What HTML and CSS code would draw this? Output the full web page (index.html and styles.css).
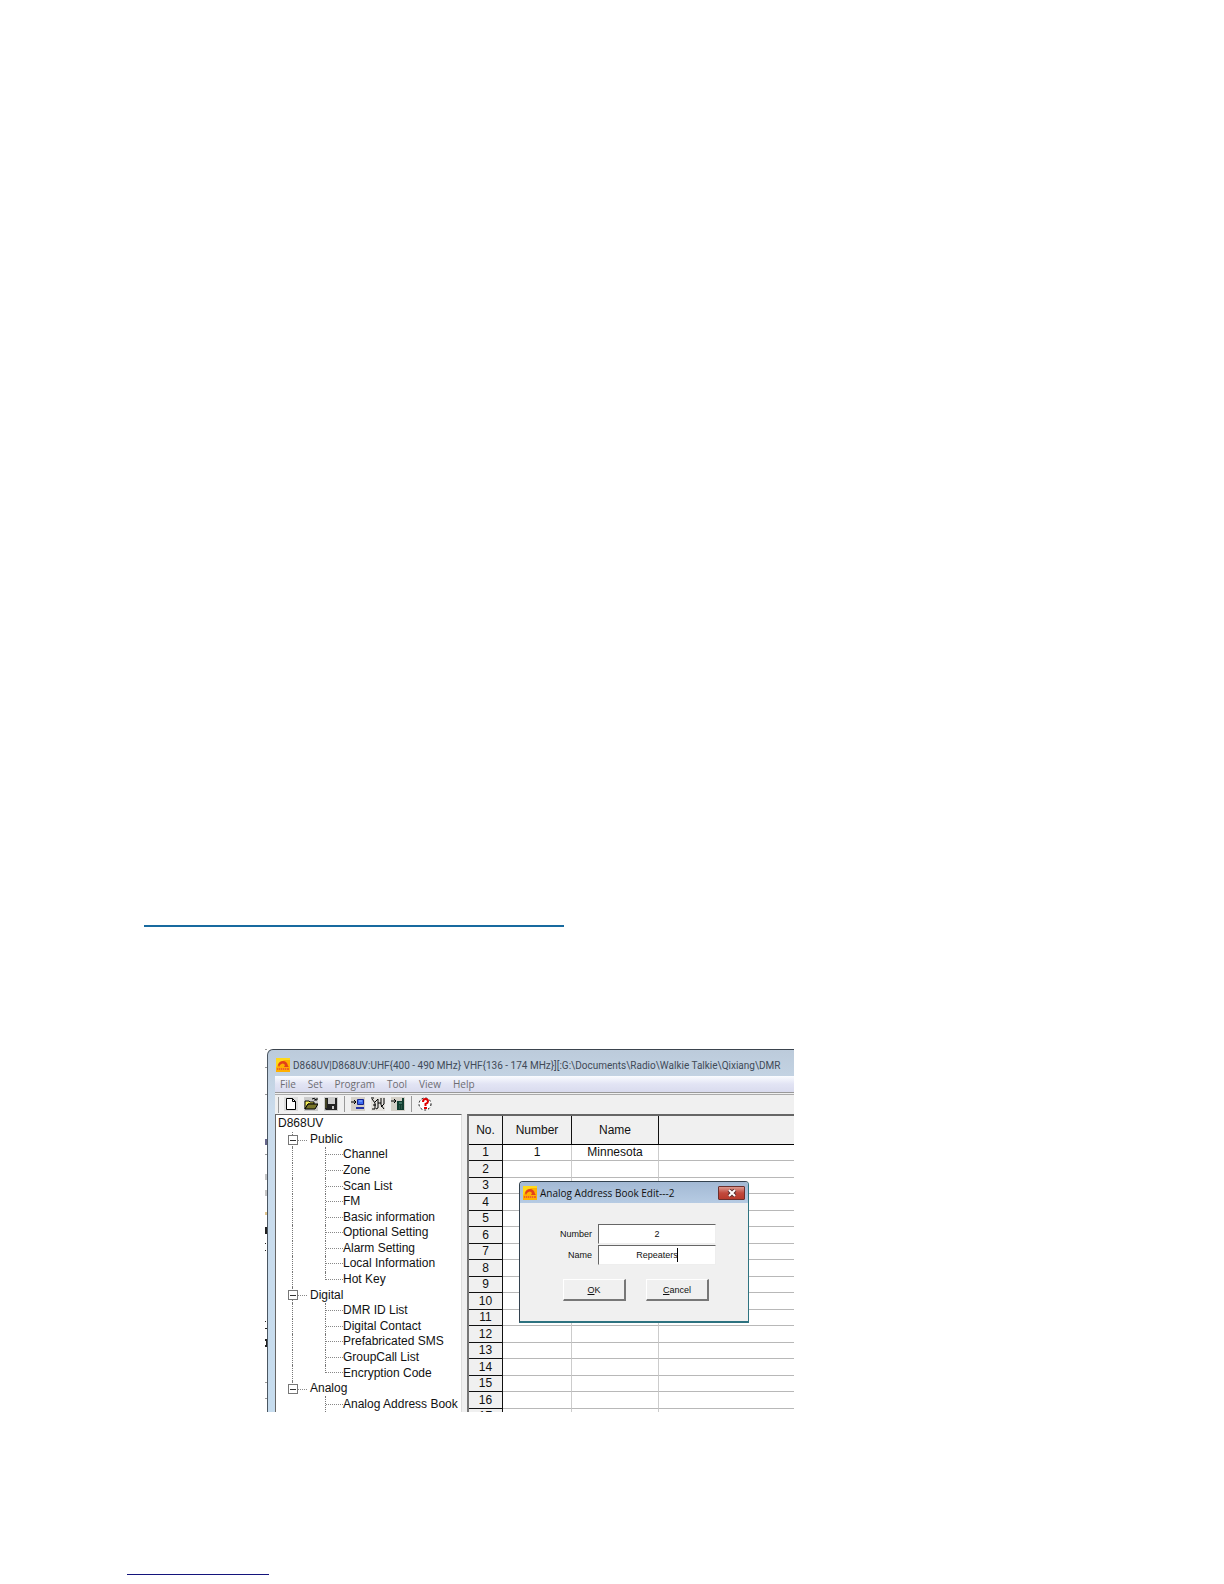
FILE: index.html
```html
<!DOCTYPE html>
<html lang="en">

<head>
  <meta charset="UTF-8">
  <meta name="viewport" content="width=device-width, initial-scale=1.0">
  <title>Analog Address Book</title>
  <link rel="stylesheet" href="styles.css">
</head>

<body>

  <svg class="defs" width="0" height="0">
    <symbol id="logo" viewBox="0 0 14 14">
      <rect width="14" height="14" fill="#ffb000" />
      <path d="M0 0h14v2L8 2 2 6 0 10z" fill="#ffd91a" />
      <path d="M2 7q1-4 5-4t5 5l1 1H8l1-2Q7 4 4 7L3 9z" fill="#e2401a" />
      <path d="M1 10h12v2H1z" fill="#f0641e" />
      <path d="M2 11h10" stroke="#ffc31a" stroke-dasharray="1 1" />
    </symbol>
  </svg>

  <main class="page">
    <hr class="rule rule-heading">

    <div class="figure">
      <svg class="behind" viewBox="0 0 2 363">
        <path d="M0 0h2v1H0zM0 18h2v1H0zM0 45h2v1H0zM0 105h2v1H0zM0 333h2v1H0zM0 349h2v1H0z" fill="#999" />
        <path d="M0 90h2v6H0z" fill="#66668c" />
        <path d="M0 125h2v6H0zM0 141h2v6H0z" fill="#c4c4c4" />
        <path d="M0 163h2v3H0z" fill="#e0c48c" />
        <path d="M0 178h2v7H0zM0 194h1v1H0zM0 201h1v1H0zM0 272h1v1H0zM0 279h2v1H0zM0 290h2v2H0zM0 296h2v2H0zM1 292h1v4H1z" fill="#222" />
      </svg>

      <div class="window">
        <div class="titlebar">
          <svg class="logo"><use href="#logo" /></svg>
          <span>D868UV|D868UV:UHF{400 - 490 MHz} VHF{136 - 174 MHz}][:G:\Documents\Radio\Walkie Talkie\Qixiang\DMR</span>
        </div>

        <div class="client">
          <nav class="menu">
            <button>File</button>
            <button>Set</button>
            <button>Program</button>
            <button>Tool</button>
            <button>View</button>
            <button>Help</button>
          </nav>

          <div class="toolbar">
            <button aria-label="New">
              <svg viewBox="0 0 14 14"><rect width="14" height="14" fill="#ddd" /><path d="M2.500 1.500h6l3 3v8h-9z" fill="#fff" stroke="#000" /><path d="M8.500 1.500v3h3" fill="none" stroke="#000" /></svg>
            </button>
            <button aria-label="Open">
              <svg viewBox="0 0 14 14"><rect width="14" height="14" fill="#ccc" /><path d="M1 4h4l1 1h4v2H4l-3 5z" fill="#f5ee58" stroke="#000" /><path d="M4 7h10l-3 5H1z" fill="#77742a" stroke="#000" /><path d="M8 2q3-2 4 1M10 3h3V1" fill="none" stroke="#000" /></svg>
            </button>
            <button aria-label="Save">
              <svg viewBox="0 0 14 14"><rect width="14" height="14" fill="#ccc" /><path d="M1 1h12v12H2l-1-1z" fill="#222" /><path d="M4 1h7v6H4z" fill="#ccc" /><path d="M8 9h2v3H8z" fill="#ccc" /><path d="M2 2v9" stroke="#67672a" /></svg>
            </button>
            <i></i>
            <button aria-label="Read from radio">
              <svg viewBox="0 0 14 14"><rect width="14" height="14" fill="#d4d0c8" /><path d="M0 5h5M3 3l2 2-2 2" fill="none" stroke="#000" /><path d="M6.500 2.500h6v5h-6z" fill="#3d6cf0" stroke="#14208c" /><path d="M8 4h3" stroke="#9cc0ff" /><path d="M5 10h8v2H5z" fill="#2736a4" /></svg>
            </button>
            <button aria-label="Find">
              <svg viewBox="0 0 14 14"><rect width="14" height="14" fill="#e4e2de" /><path d="M1 2l3 4v6H1M4 5l3-3v9l-2 1M7 6h3M10 1v7l3 4M13 1v6l-3 3M2 8h3M0 1h3" fill="none" stroke="#000" /></svg>
            </button>
            <button aria-label="Write to radio">
              <svg viewBox="0 0 14 14"><rect width="14" height="14" fill="#d4d0c8" /><path d="M0 4h5M3 2l2 2-2 2" fill="none" stroke="#000" /><path d="M6 4h7v9H6zM11 1h2v3h-2z" fill="#123d30" /><path d="M8 6h3" stroke="#6fa892" /><path d="M8 9h4M8 11h4" stroke="#48735f" stroke-dasharray="1 1" /></svg>
            </button>
            <i></i>
            <button aria-label="Help">
              <svg viewBox="0 0 14 14"><circle cx="7" cy="7" r="6" fill="#fff" stroke="#000" stroke-dasharray="2 2" /><path d="M5 5q0-3 2.500-3T10 4.500Q10 6 7.500 7v2" fill="none" stroke="#e00000" stroke-width="2" /><path d="M6 10h3v2H6z" fill="#e00000" /></svg>
            </button>
          </div>

          <div class="panes">
            <ul class="tree">
              <li class="root">D868UV</li>
              <li class="branch first">Public</li>
              <li class="leaf">Channel</li>
              <li class="leaf">Zone</li>
              <li class="leaf">Scan List</li>
              <li class="leaf">FM</li>
              <li class="leaf">Basic information</li>
              <li class="leaf">Optional Setting</li>
              <li class="leaf">Alarm Setting</li>
              <li class="leaf">Local Information</li>
              <li class="leaf last">Hot Key</li>
              <li class="branch">Digital</li>
              <li class="leaf">DMR ID List</li>
              <li class="leaf">Digital Contact</li>
              <li class="leaf">Prefabricated SMS</li>
              <li class="leaf">GroupCall List</li>
              <li class="leaf last">Encryption Code</li>
              <li class="branch end">Analog</li>
              <li class="leaf under-end">Analog Address Book</li>
            </ul>

            <div class="sheet">
              <table>
                <thead>
                  <tr><th class="col-no">No.</th><th class="col-number">Number</th><th class="col-name">Name</th><th></th></tr>
                </thead>
                <tbody>
                  <tr><th>1</th><td>1</td><td>Minnesota</td><td></td></tr>
                  <tr><th>2</th><td></td><td></td><td></td></tr>
                  <tr><th>3</th><td></td><td></td><td></td></tr>
                  <tr><th>4</th><td></td><td></td><td></td></tr>
                  <tr><th>5</th><td></td><td></td><td></td></tr>
                  <tr><th>6</th><td></td><td></td><td></td></tr>
                  <tr><th>7</th><td></td><td></td><td></td></tr>
                  <tr><th>8</th><td></td><td></td><td></td></tr>
                  <tr><th>9</th><td></td><td></td><td></td></tr>
                  <tr><th>10</th><td></td><td></td><td></td></tr>
                  <tr><th>11</th><td></td><td></td><td></td></tr>
                  <tr><th>12</th><td></td><td></td><td></td></tr>
                  <tr><th>13</th><td></td><td></td><td></td></tr>
                  <tr><th>14</th><td></td><td></td><td></td></tr>
                  <tr><th>15</th><td></td><td></td><td></td></tr>
                  <tr><th>16</th><td></td><td></td><td></td></tr>
                  <tr><th>17</th><td></td><td></td><td></td></tr>
                </tbody>
              </table>
            </div>
          </div>
        </div>
      </div>

      <form class="dialog">
        <div class="dialog-title">
          <svg class="logo"><use href="#logo" /></svg>
          <span>Analog Address Book Edit---2</span>
          <button type="button" class="close" aria-label="Close">
            <svg viewBox="0 0 10 8"><path d="M2 1l6 6M8 1L2 7" stroke="#5a3030" stroke-width="4" /><path d="M2 1l6 6M8 1L2 7" stroke="#fff" stroke-width="2" /></svg>
          </button>
        </div>
        <div class="fields">
          <label for="number">Number</label>
          <input id="number" type="text" value="2">
          <label for="name">Name</label>
          <div class="caret-box">
            <input id="name" type="text" value="Repeaters">
            <span class="caret"></span>
          </div>
        </div>
        <div class="actions">
          <button type="button"><u>O</u>K</button>
          <button type="button"><u>C</u>ancel</button>
        </div>
      </form>
    </div>

    <hr class="rule rule-footer">
  </main>

</body>

</html>
```

FILE: styles.css
```css
* {
  margin: 0;
  padding: 0;
  box-sizing: border-box;
}

body {
  background: #fff;
  color: #111;
  font-family: "Liberation Sans", Arial, sans-serif;
  font-size: 12px;
}

button {
  border: 0;
  background: none;
  font: inherit;
  color: inherit;
}

.defs {
  display: block;
}

.page {
  padding: 925px 127px 0;
}

.rule {
  border: 0;
}

.rule-heading {
  width: 420px;
  max-width: 100%;
  height: 2px;
  margin-left: 17px;
  background: #186a9f;
}

.rule-footer {
  width: 142px;
  height: 1px;
  margin-top: 162px;
  background: #14147c;
}

.figure {
  position: relative;
  display: flex;
  max-width: 529px;
  height: 363px;
  margin: 122px 0 0 138px;
  overflow: hidden;
}

/* sliver of the window lying behind */
.behind {
  flex: none;
  width: 2px;
  height: 363px;
}

.window {
  flex: 1;
  min-width: 0;
  display: flex;
  flex-direction: column;
  padding-left: 7px;
  border-top: 1px solid #3b444e;
  border-left: 1px solid #4b5661;
  border-top-left-radius: 6px;
  background: linear-gradient(#bccbdb, #cbdcec 60px, #c6dcee);
}

.titlebar {
  display: flex;
  align-items: center;
  gap: 3px;
  height: 26px;
  padding: 4px 0 0 1px;
  color: #3f4a57;
  font-family: Roboto, sans-serif;
  font-size: 10px;
  white-space: nowrap;
}

.logo {
  flex: none;
  width: 14px;
  height: 14px;
}

.client {
  flex: 1;
  min-height: 0;
  display: flex;
  flex-direction: column;
  background: #f0f0f0;
}

.menu {
  display: flex;
  gap: 12px;
  height: 16px;
  padding-left: 5px;
  background: linear-gradient(#fafcff, #e2e4f4 50%, #d9dbee);
  color: #6d6d72;
  font-family: "Open Sans", sans-serif;
  font-size: 10px;
}

.toolbar {
  display: flex;
  align-items: center;
  gap: 6px;
  height: 22px;
  padding-left: 9px;
  border-top: 1px solid #999;
  box-shadow: inset 0 1px #f0f0f0, inset 0 2px #aaa;
  background: linear-gradient(#999, #999) 3px 4px / 1px 16px no-repeat;
}

.toolbar svg {
  display: block;
  width: 14px;
  height: 14px;
}

.toolbar i {
  width: 1px;
  height: 16px;
  background: #999;
}

.panes {
  flex: 1;
  min-height: 0;
  display: flex;
  gap: 5px;
}

.tree {
  flex: none;
  width: 187px;
  display: grid;
  grid-auto-rows: 1fr;
  padding-top: 1px;
  border-top: 1px solid #666;
  border-left: 1px solid #666;
  border-right: 1px solid #ddd;
  background: #fff;
  list-style: none;
  overflow: hidden;
}

.tree li {
  position: relative;
  display: flex;
  align-items: center;
  min-height: 0;
  line-height: 15px;
  white-space: nowrap;
}

.tree .root {
  padding-left: 2px;
}

.tree .branch {
  padding-left: 34px;
}

.tree .leaf {
  padding-left: 67px;
}

/* trunk down the left, then the inner line with its stub */
.branch::before,
.leaf::before {
  content: '';
  position: absolute;
  top: 0;
  bottom: 0;
  left: 16px;
  border-left: 1px dotted #777;
}

.branch.end::before {
  bottom: 50%;
}

.leaf.under-end::before {
  display: none;
}

.leaf::after {
  content: '';
  position: absolute;
  top: 0;
  bottom: 0;
  left: 49px;
  width: 17px;
  border-left: 1px dotted #777;
  background: repeating-linear-gradient(90deg, #888 0 1px, transparent 1px 2px) 0 50% / 100% 1px no-repeat;
}

.leaf.last::after {
  bottom: 50%;
  background-position: 0 100%;
}

.branch::after {
  content: '';
  position: absolute;
  top: 3px;
  left: 12px;
  width: 20px;
  height: 10px;
  background:
    linear-gradient(#333, #333) 2px 5px / 6px 1px no-repeat,
    linear-gradient(#777, #777) 0 0 / 10px 1px no-repeat,
    linear-gradient(#777, #777) 0 9px / 10px 1px no-repeat,
    linear-gradient(#777, #777) 0 0 / 1px 10px no-repeat,
    linear-gradient(#777, #777) 9px 0 / 1px 10px no-repeat,
    linear-gradient(#fff, #fff) 1px 1px / 8px 8px no-repeat,
    repeating-linear-gradient(90deg, #888 0 1px, transparent 1px 2px) 0 5px / 100% 1px no-repeat;
}

.sheet {
  flex: 1;
  min-width: 0;
  border-top: 2px solid #666;
  border-left: 2px solid #777;
  background: #fff;
  overflow: hidden;
}

table {
  width: 100%;
  table-layout: fixed;
  border-collapse: separate;
  border-spacing: 0;
  text-align: center;
}

th,
td {
  height: 16px;
  line-height: 15px;
  font-weight: normal;
  border-right: 1px solid #ccc;
  border-bottom: 1px solid #b8b8b8;
}

tbody tr:nth-child(even) > * {
  height: 17px;
}

th {
  background: #f0f0f0;
  border-right-color: #111;
  border-bottom-color: #111;
}

thead th {
  height: 29px;
  border-bottom: 1px solid #000;
}

th:last-child,
td:last-child {
  border-right: 0;
}

.col-no {
  width: 34px;
}

.col-number {
  width: 69px;
}

.col-name {
  width: 87px;
}

.dialog {
  position: absolute;
  top: 132px;
  left: 254px;
  width: 230px;
  border: 1px solid #33424f;
  border-right-color: #2e7380;
  border-bottom: 2px solid #2e7380;
  border-radius: 4px 4px 0 0;
  background: #f0f0f0;
  font-size: 9px;
}

.dialog-title {
  display: flex;
  align-items: center;
  gap: 3px;
  height: 21px;
  padding: 0 3px;
  border-radius: 3px 3px 0 0;
  background: linear-gradient(#a3b9d4, #b6cbe3);
  font-family: "Open Sans", sans-serif;
  font-size: 10px;
}

.close {
  display: flex;
  align-items: center;
  justify-content: center;
  width: 27px;
  height: 14px;
  margin-left: auto;
  border: 1px solid #6b2f2c;
  border-radius: 1px;
  background: linear-gradient(#dc9a90, #c1493c 50%, #b83a2c);
}

.close svg {
  width: 10px;
  height: 8px;
}

.fields {
  display: grid;
  grid-template-columns: 72px 118px;
  column-gap: 6px;
  row-gap: 1px;
  align-items: center;
  margin-top: 21px;
  text-align: right;
}

.fields input {
  display: block;
  width: 100%;
  height: 20px;
  border: 1px solid #eee;
  border-top-color: #666;
  border-left-color: #666;
  background: #fff;
  color: #111;
  font: inherit;
  text-align: center;
}

.caret-box {
  position: relative;
}

.caret {
  position: absolute;
  top: 3px;
  left: 79px;
  width: 1px;
  height: 14px;
  background: #000;
}

.actions {
  display: flex;
  gap: 20px;
  padding: 14px 0 20px 43px;
}

.actions button {
  width: 63px;
  height: 22px;
  border: 1px solid #fff;
  border-right: 2px solid #777;
  border-bottom: 2px solid #777;
  background: #f0f0f0;
}
```
